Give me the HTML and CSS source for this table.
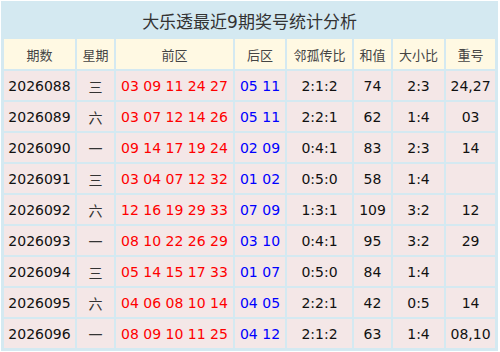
FILE: index.html
```html
<!DOCTYPE html>
<html lang="zh">
<head>
<meta charset="utf-8">
<title>大乐透最近9期奖号统计分析</title>
<link rel="stylesheet" href="styles.css">
</head>
<body>
<table class="stats">
  <colgroup>
    <col class="c-issue"><col class="c-week"><col class="c-front"><col class="c-back">
    <col class="c-ratio"><col class="c-sum"><col class="c-size"><col class="c-repeat">
  </colgroup>
  <thead>
    <tr><th class="title" colspan="8">大乐透最近9期奖号统计分析</th></tr>
    <tr class="head">
      <th>期数</th><th>星期</th><th>前区</th><th>后区</th><th>邻孤传比</th><th>和值</th><th>大小比</th><th>重号</th>
    </tr>
  </thead>
  <tbody>
    <tr><td>2026088</td><td class="wk">三</td><td class="red">03 09 11 24 27</td><td class="blue">05 11</td><td>2:1:2</td><td>74</td><td>2:3</td><td>24,27</td></tr>
    <tr><td>2026089</td><td class="wk">六</td><td class="red">03 07 12 14 26</td><td class="blue">05 11</td><td>2:2:1</td><td>62</td><td>1:4</td><td>03</td></tr>
    <tr><td>2026090</td><td class="wk">一</td><td class="red">09 14 17 19 24</td><td class="blue">02 09</td><td>0:4:1</td><td>83</td><td>2:3</td><td>14</td></tr>
    <tr><td>2026091</td><td class="wk">三</td><td class="red">03 04 07 12 32</td><td class="blue">01 02</td><td>0:5:0</td><td>58</td><td>1:4</td><td></td></tr>
    <tr><td>2026092</td><td class="wk">六</td><td class="red">12 16 19 29 33</td><td class="blue">07 09</td><td>1:3:1</td><td>109</td><td>3:2</td><td>12</td></tr>
    <tr><td>2026093</td><td class="wk">一</td><td class="red">08 10 22 26 29</td><td class="blue">03 10</td><td>0:4:1</td><td>95</td><td>3:2</td><td>29</td></tr>
    <tr><td>2026094</td><td class="wk">三</td><td class="red">05 14 15 17 33</td><td class="blue">01 07</td><td>0:5:0</td><td>84</td><td>1:4</td><td></td></tr>
    <tr><td>2026095</td><td class="wk">六</td><td class="red">04 06 08 10 14</td><td class="blue">04 05</td><td>2:2:1</td><td>42</td><td>0:5</td><td>14</td></tr>
    <tr><td>2026096</td><td class="wk">一</td><td class="red">08 09 10 11 25</td><td class="blue">04 12</td><td>2:1:2</td><td>63</td><td>1:4</td><td>08,10</td></tr>
  </tbody>
</table>
</body>
</html>
```

FILE: styles.css
```css
html, body {
  margin: 0;
  padding: 0;
  background: #ffffff;
}

body {
  padding: 1px;
  font-family: "DejaVu Sans", "Noto Sans CJK SC", sans-serif;
}

.stats {
  table-layout: fixed;
  border-collapse: separate;
  border-spacing: 2px;
  border: 1px solid #d4e9f1;
  background: #d4e9f1;
  width: 497px;
}

.c-issue { width: 71px; }
.c-week { width: 37px; }
.c-front { width: 117px; }
.c-back { width: 50px; }
.c-ratio { width: 65px; }
.c-sum { width: 37px; }
.c-size { width: 51px; }
.c-repeat { width: 49px; }

.stats th,
.stats td {
  padding: 0;
  text-align: center;
  white-space: nowrap;
  overflow: hidden;
}

.title {
  height: 33px;
  font-weight: normal;
  font-size: 17px;
  color: #333333;
  background: #d4e9f1;
}

.head th {
  height: 30px;
  font-weight: normal;
  font-size: 13px;
  color: #444444;
  background: #fff9e3;
}

.stats td {
  height: 29px;
  font-size: 14px;
  color: #111111;
  background: #f4e7e7;
}

.stats td.wk {
  color: #333333;
}

.stats td.red { color: #ff0000; }
.stats td.blue { color: #0000ff; }
```
